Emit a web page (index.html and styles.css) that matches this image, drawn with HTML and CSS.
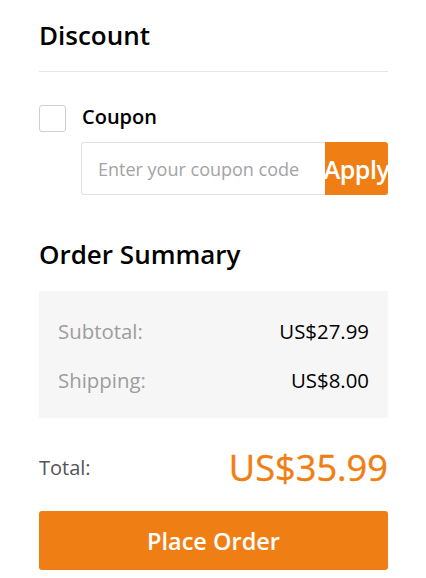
FILE: index.html
```html
<!DOCTYPE html>
<html lang="en">
<head>
<meta charset="utf-8">
<title>Checkout</title>
<link rel="stylesheet" href="styles.css">
</head>
<body>
<div class="panel">
  <h2 class="title">Discount</h2>
  <div class="divider"></div>
  <label class="coupon-toggle">
    <span class="checkbox"></span>
    <span class="coupon-label">Coupon</span>
  </label>
  <div class="coupon-form">
    <input class="coupon-input" type="text" placeholder="Enter your coupon code">
    <button class="apply-btn" type="button">Apply</button>
  </div>
  <h2 class="title summary-title">Order Summary</h2>
  <div class="summary-box">
    <div class="row"><span class="row-label">Subtotal:</span><span class="row-value">US$27.99</span></div>
    <div class="row"><span class="row-label">Shipping:</span><span class="row-value">US$8.00</span></div>
  </div>
  <div class="total-row">
    <span class="total-label">Total:</span>
    <span class="total-value">US$35.99</span>
  </div>
  <button class="place-btn" type="button">Place Order</button>
</div>
</body>
</html>
```
FILE: styles.css
```css
* { box-sizing: border-box; }
html, body { margin: 0; padding: 0; background: #fff; }
body { font-family: "Open Sans", "Noto Sans", sans-serif; color: #000; }
.panel { padding: 17px 38px 0 39px; width: 426px; }
.title { margin: 0; font-size: 26px; font-weight: 600; line-height: 36px; color: #000; }
.divider { height: 1px; background: #e6e6e6; margin-top: 18px; }
.coupon-toggle { display: flex; align-items: center; margin-top: 33px; height: 27px; }
.checkbox { width: 27px; height: 27px; border: 1px solid #cfcfcf; border-radius: 3px; background: #fff; }
.coupon-label { margin-left: 16px; font-size: 20px; font-weight: 600; line-height: 27px; padding-bottom: 4px; }
.coupon-form { display: flex; margin-left: 42px; margin-top: 10px; height: 53px; }
.coupon-input { flex: 1; min-width: 0; border: 1px solid #e2e2e2; border-right: none; border-radius: 3px 0 0 3px; padding: 0 16px; font-family: inherit; font-size: 18px; color: #333; outline: none; }
.coupon-input::placeholder { color: #a3a3a6; }
.apply-btn { width: 63px; border: none; border-radius: 0 3px 3px 0; background: #ef7f14; color: #fff; font-family: inherit; font-size: 25px; font-weight: 600; padding: 0; white-space: nowrap; overflow: visible; display: flex; justify-content: center; align-items: center; letter-spacing: -0.5px; }
.summary-title { margin-top: 41px; }
.summary-box { background: #f6f6f6; margin-top: 19px; padding: 25px 19px 23px 19px; display: flex; flex-direction: column; gap: 19px; }
.row { display: flex; justify-content: space-between; align-items: center; font-size: 20.4px; line-height: 30px; }
.row-label { color: #9d9d9d; }
.row-value { color: #000; }
.total-row { display: flex; justify-content: space-between; align-items: center; margin-top: 28px; }
.total-label { font-size: 20px; color: #555; }
.total-value { font-size: 36.2px; color: #ef7f14; font-weight: 400; line-height: 42px; -webkit-text-stroke: 0.4px #ef7f14; }
.place-btn { display: block; width: 100%; height: 59px; margin-top: 23px; border: none; border-radius: 3px; background: #ef7f14; color: #fff; font-family: inherit; font-size: 23.5px; font-weight: 600; }
```
